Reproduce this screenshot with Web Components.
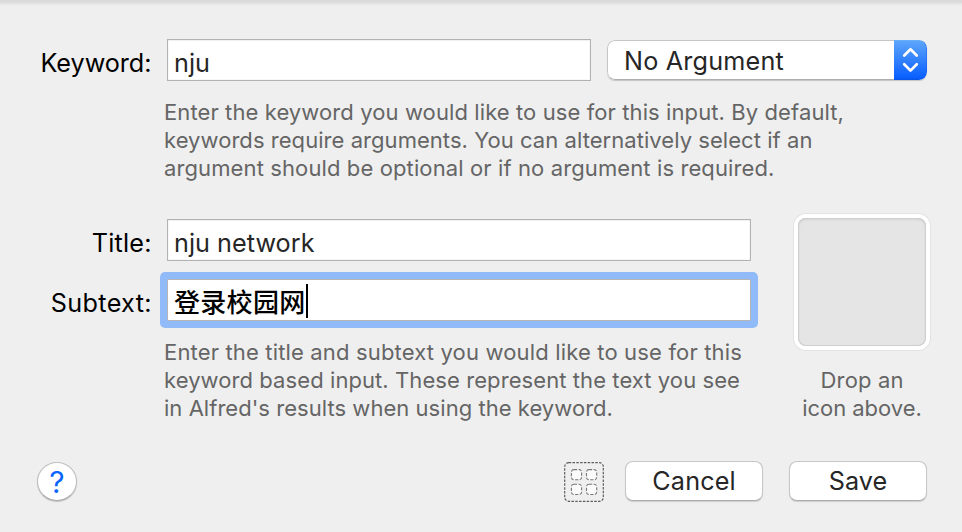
<!DOCTYPE html>
<html lang="en">
<head>
<meta charset="utf-8">
<title>Keyword input</title>
<style>
html, body { margin: 0; background: #efefef; }
body { font-family: Inter, "Noto Sans CJK SC", sans-serif; font-weight: 440; overflow: hidden; }
</style>
</head>
<body>
<keyword-sheet></keyword-sheet>
<script>
const define = (name, html, setup) => {
  const t = document.createElement('template');
  t.innerHTML = html;
  customElements.define(name, class extends HTMLElement {
    constructor() {
      super();
      this.attachShadow({ mode: 'open' }).append(t.content.cloneNode(true));
    }
    connectedCallback() { if (setup) setup(this, this.shadowRoot); }
  });
};

/* One line of text whose tracking is set so that it takes up the given width. */
define('text-line', `
<style>:host { display: block; white-space: nowrap; } span { display: inline-block; vertical-align: top; }</style>
<span><slot></slot></span>`, (host, root) => {
  const span = root.querySelector('span');
  const n = host.textContent.length;
  const want = parseFloat(host.getAttribute('width'));
  if (!want) return;
  const track = (want - span.getBoundingClientRect().width) / n;
  span.style.letterSpacing = track.toFixed(3) + 'px';
  span.style.marginRight = (-track).toFixed(3) + 'px';
});

define('form-label', `
<style>:host { display: flex; justify-content: flex-end; width: 151.5px; height: 42px; flex: none;
  font-size: 25.2px; line-height: 42px; padding-top: 3px; box-sizing: border-box; color: #000; margin-right: 15.5px; }</style>
<slot></slot>`);

define('text-field', `
<style>
:host { display: flex; align-items: flex-start; box-sizing: border-box; height: 42px; flex: 1; background: #fff;
  border: 1px solid #b2b2b2; box-shadow: inset 0 1px 0 #f0f0f0, inset 0 0 0 1px #f7f7f7;
  font-size: 25.2px; line-height: 42px; padding: 2px 0 0 6px; color: #262626; }
:host([focused]) { box-shadow: 0 0 0 7px #91baf8; border-color: #b4b4b4; border-radius: 1.5px; color: #000; font-size: 26px; font-weight: 500; }
i { display: none; width: 2px; height: 34px; background: #000; margin: 2px 0 0 1px; }
:host([focused]) i { display: block; }
</style>
<slot></slot><i></i>`);

define('help-text', `
<style>:host { display: block; font-size: 22px; line-height: 28px; color: #656565; }</style>
<slot></slot>`);

define('popup-select', `
<style>
:host { display: flex; justify-content: space-between; width: 320px; height: 40px; flex: none; box-sizing: border-box;
  margin: 1px 0 0 16px; border-radius: 8px; background: #fff; overflow: hidden;
  box-shadow: 0 1px 1px rgba(0,0,0,.18); font-size: 25.2px; line-height: 40px; color: #262626; }
.value { flex: 1; padding: 1px 0 0 16px; border: 1px solid #c6c6c6; border-bottom-color: #adadad; border-right: 0; border-radius: 8px 0 0 8px; line-height: 38px; }
.knob { width: 33px; box-sizing: border-box; background: linear-gradient(#6bb0fb, #5ba4fb 4%, #0a60ff 94%, #0853e6); border-radius: 0 8px 8px 0; box-shadow: inset -1px 0 0 rgba(20,90,230,.4); }
svg { display: block; }
</style>
<div class="value"><slot></slot></div>
<div class="knob"><svg width="33" height="40" fill="none" stroke="#fff" stroke-width="2.7" stroke-linecap="round" stroke-linejoin="round"><path d="M10.2 15.5 16.5 9.2 22.8 15.5M10.2 24.3 16.5 30.6 22.8 24.3"/></svg></div>`);

define('icon-well', `
<style>
:host { display: block; box-sizing: border-box; width: 136px; height: 136px; border: 4px solid #fff; border-radius: 12px;
  background: #fff; box-shadow: 0 0 0 1px #e3e3e3; }
div { height: 128px; border-radius: 8px; background: #e5e5e5; box-shadow: inset 0 0 0 1px #cfcfcf, inset 0 1px 3px rgba(0,0,0,.14); }
</style><div></div>`);

define('push-button', `
<style>
:host { display: flex; justify-content: center; box-sizing: border-box; width: 138px; height: 40px; border-radius: 8px; background: #fff;
  border: 1px solid #c6c6c6; border-bottom-color: #adadad; box-shadow: 0 1px 1px rgba(0,0,0,.14);
  font-size: 25.2px; line-height: 39px; color: #262626; }
</style><slot></slot>`);

define('help-button', `
<style>
:host { display: block; box-sizing: border-box; width: 40px; height: 39px; border-radius: 50%; background: #fff; border: 1px solid #bfbfbf;
  border-bottom-color: #aaa; box-shadow: 0 1px 1px rgba(0,0,0,.2); color: #0a66ff; font-size: 30px; font-weight: 400; line-height: 39px; text-align: center; }
</style><slot></slot>`);

define('grid-icon', `
<style>:host { display: block; width: 40px; height: 40px; margin-top: 1px; } svg { display: block; }</style>
<svg width="40" height="40" fill="none">
<rect x=".7" y=".7" width="38.6" height="38.6" rx="4" stroke="#5c5c5c" stroke-width="1.2" stroke-dasharray="2.5 1.3"/>
<g fill="#fbfbfb" stroke="#777" stroke-width="1.1" stroke-dasharray="3.2 1.5">
<rect x="7.4" y="7.6" width="10.2" height="10.2" rx="2.5"/><rect x="22.5" y="7.6" width="10.2" height="10.2" rx="2.5"/>
<rect x="7.4" y="22.3" width="10.2" height="10.2" rx="2.5"/><rect x="22.5" y="22.3" width="10.2" height="10.2" rx="2.5"/></g></svg>`);

define('keyword-sheet', `
<style>
:host { display: block; box-sizing: border-box; width: 962px; height: 532px; padding: 39px 32px 0 0;
  background: linear-gradient(#d9d9d9 0, #dedede 3px, #e8e8e8 4px, #efefef 7px); }
.row { display: flex; height: 42px; }
.first { padding-right: 3px; }
.row + .row { margin-top: 18px; }
help-text.wide { padding: 17px 0 0 164px; }
.details { display: flex; margin-top: 32px; height: 208px; }
.left { width: 751px; padding-top: 5px; box-sizing: border-box; }
.left help-text { padding: 17px 0 0 164px; }
.right { width: 136px; margin-left: 43px; }
.right help-text { padding-top: 16px; display: flex; flex-direction: column; align-items: center; }
footer { display: flex; margin: 39px 3px 0 37px; align-items: flex-start; }
help-button { margin: 1px auto 0 0; }
push-button { margin-left: 21px; }
push-button + push-button { margin-left: 26px; }
</style>
<div class="row first"><form-label><text-line width="111">Keyword:</text-line></form-label>
<text-field><text-line width="36">nju</text-line></text-field>
<popup-select><text-line width="160">No Argument</text-line></popup-select></div>
<help-text class="wide">
<text-line width="680">Enter the keyword you would like to use for this input. By default,</text-line>
<text-line width="648.5">keywords require arguments. You can alternatively select if an</text-line>
<text-line width="610.5">argument should be optional or if no argument is required.</text-line></help-text>
<div class="details"><div class="left">
<div class="row"><form-label><text-line width="60">Title:</text-line></form-label><text-field><text-line width="140.5">nju network</text-line></text-field></div>
<div class="row"><form-label><text-line width="101">Subtext:</text-line></form-label><text-field focused><text-line width="131.5">登录校园网</text-line></text-field></div>
<help-text>
<text-line width="578">Enter the title and subtext you would like to use for this</text-line>
<text-line width="576">keyword based input. These represent the text you see</text-line>
<text-line width="449">in Alfred's results when using the keyword.</text-line></help-text>
</div><div class="right"><icon-well></icon-well>
<help-text><text-line width="83">Drop an</text-line><text-line width="119.5">icon above.</text-line></help-text></div></div>
<footer><help-button>?</help-button><grid-icon></grid-icon>
<push-button><text-line width="83.5">Cancel</text-line></push-button>
<push-button><text-line width="58.5">Save</text-line></push-button></footer>`);
</script>
</body>
</html>
